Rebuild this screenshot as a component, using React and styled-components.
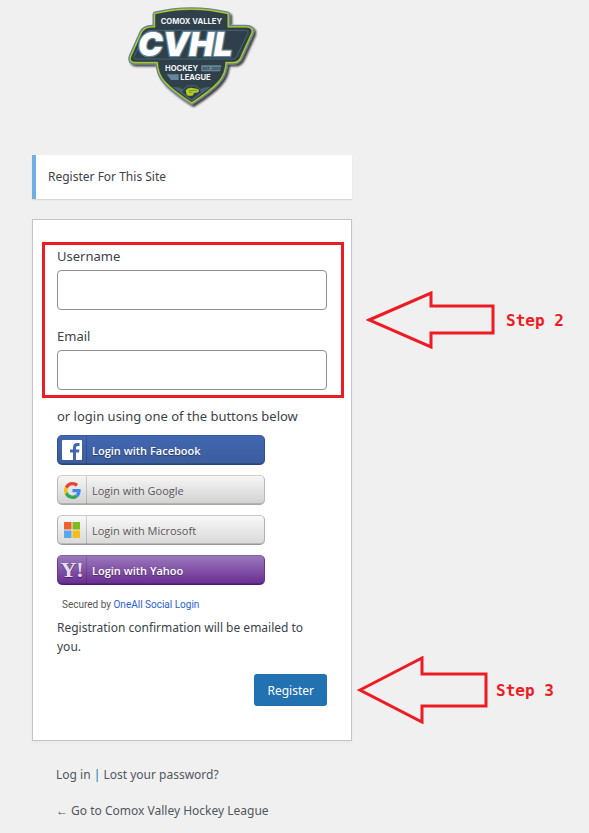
import React from 'react'
import styled, { createGlobalStyle } from 'styled-components'

const GlobalStyle = createGlobalStyle`
    * {
        box-sizing: border-box;
    }
    body {
        margin: 0;
        background: #f0f0f0;
        color: #3c434a;
        font-family: "Noto Sans", "Open Sans", sans-serif;
        font-size: 13px;
    }
`

const Page = styled.main`
    display: flex;
    flex-direction: column;
    max-width: 384px;
    padding: 0 32px 12px;
`

const Header = styled.header`
    display: flex;
    justify-content: center;
    margin-bottom: 43px;
`

const Message = styled.p`
    margin: 0 0 20px;
    padding: 12px;
    border-left: 4px solid #72aee6;
    background: #fff;
    box-shadow: 0 1px 1px rgba(0, 0, 0, 0.1);
    font-size: 12px;
    line-height: 20px;
`

const Form = styled.form`
    padding: 26px 24px 34px;
    border: 1px solid #c3c4c7;
    background: #fff;
    box-shadow: 0 1px 3px rgba(0, 0, 0, 0.04);
`

const Fields = styled.div`
    position: relative;
    display: flex;
    flex-direction: column;
    gap: 16px;
    margin-bottom: 16px;
`

const Field = styled.div`
    display: flex;
    flex-direction: column;
    gap: 3px;
`

const Label = styled.label`
    line-height: 21px;
`

const Input = styled.input`
    width: 100%;
    height: 40px;
    padding: 3px 5px;
    border: 1px solid #8c8f94;
    border-radius: 4px;
    background: #fff;
    font-family: inherit;
    font-size: 24px;
`

const Highlight = styled.div`
    position: absolute;
    inset: -4px -17px -8px -15px;
    border: 3px solid #ed1c24;
    pointer-events: none;
`

const Step = styled.div`
    position: absolute;
    top: 50%;
    left: 100%;
    display: flex;
    align-items: center;
    gap: 8px;
    margin-left: ${(props) => props.$space};
    transform: translateY(-50%);
    color: #ed1c24;
    font-family: "DejaVu Sans Mono", monospace;
    font-size: 16px;
    font-weight: bold;
    white-space: nowrap;
`

const Text = styled.p`
    margin: 0;
    line-height: 21px;
`

const Notice = styled.p`
    margin: 0;
    font-size: 12px;
    line-height: 19px;
`

const Providers = styled.div`
    display: flex;
    flex-direction: column;
    align-items: flex-start;
    gap: 10px;
    margin: 8px 0 12px;
`

const looks = {
    facebook: `
        border-color: #3a5a9b #2f4f8f #27457f;
        background: linear-gradient(#4267b2, #3b5d9c);
        color: #fff;
    `,
    google: `
        border-color: #cfcfc6 #b9b9b2 #a9a9a2;
        background: linear-gradient(#f6f6f6, #d2d2d2);
        color: #5a5a5a;
    `,
    microsoft: `
        border-color: #c6c6c6 #b0b0b0 #989898;
        background: linear-gradient(#f8f8f8, #d9d9d9);
        color: #5a5a5a;
    `,
    yahoo: `
        border-color: #8160a8 #65378f #4c1c74;
        background: linear-gradient(#9a78bb, #692d91);
        color: #fff;
    `,
}

const ProviderButton = styled.button`
    display: flex;
    align-items: stretch;
    width: 208px;
    max-width: 100%;
    height: 30px;
    padding: 0;
    border: 1px solid;
    border-radius: 5px;
    box-shadow: inset 0 -1px 0 rgba(0, 0, 0, 0.15);
    font-family: "Open Sans", sans-serif;
    font-size: 11px;
    font-weight: ${(props) => (props.$bold ? 600 : 400)};
    text-shadow: ${(props) => (props.$bold ? '0 1px 1px rgba(0, 0, 0, 0.4)' : 'none')};
    cursor: pointer;
    ${(props) => looks[props.$look]}
`

const ProviderIcon = styled.span`
    display: flex;
    align-items: center;
    justify-content: center;
    width: 29px;
    border-right: 1px solid rgba(0, 0, 0, 0.16);
`

const ProviderName = styled.span`
    align-self: center;
    padding-left: 5px;
`

const Secured = styled.p`
    margin: 0 0 5px;
    padding-left: 5px;
    color: #555;
    font-family: Roboto, sans-serif;
    font-size: 10px;
    line-height: 16px;

    a {
        color: #2a5ed0;
        text-decoration: none;
    }
`

const Actions = styled.div`
    position: relative;
    display: flex;
    justify-content: flex-end;
    margin-top: 18px;
`

const Submit = styled.button`
    height: 32px;
    padding: 0 13px;
    border: 0;
    border-radius: 3px;
    background: #2271b1;
    color: #fff;
    font-family: inherit;
    font-size: 12px;
    cursor: pointer;
`

const Links = styled.nav`
    display: flex;
    flex-direction: column;
    gap: 16px;
    padding: 24px 24px 0;
    color: #2271b1;
    font-size: 12px;
    line-height: 20px;

    a {
        color: #50575e;
        text-decoration: none;
    }
`

const Logo = () => (
    <svg width="142" height="112" viewBox="3 0 426 336" role="img" aria-label="Comox Valley Hockey League">
        <defs>
            <filter id="drop" x="-10%" y="-10%" width="125%" height="125%">
                <feDropShadow dx="6" dy="6" stdDeviation="3" floodColor="#000" floodOpacity="0.75" />
            </filter>
            <g id="plates">
                <path d="M106 90V43Q212 17 322 43V90Z" />
                <path d="M114 180Q114 222 138 246Q160 270 215 306Q270 270 292 246Q316 222 316 180Z" />
                <path d="M96 83H378Q399 83 393 99L360 172Q354 185 340 185H44Q29 185 34 171L66 99Q74 83 96 83Z" />
            </g>
        </defs>
        <g filter="url(#drop)" strokeLinejoin="round">
            <use href="#plates" fill="#668799" stroke="#668799" strokeWidth="17" />
        </g>
        <use href="#plates" fill="#b5cf1f" stroke="#b5cf1f" strokeWidth="9" />
        <use href="#plates" fill="#2f404b" stroke="#2f404b" strokeWidth="1" />
        <path d="M98 91H374Q388 91 383 101L351 168Q347 177 337 177H50Q39 177 43 168L74 101Q80 91 98 91Z" fill="none" stroke="#486373" strokeWidth="3" />
        <text x="54" y="167" fill="#fff" stroke="#668799" strokeWidth="8" paintOrder="stroke" strokeLinejoin="round" fontFamily="Inter, sans-serif" fontSize="99" fontWeight="900" fontStyle="italic">CVHL</text>
        <g fill="#f2f4f5" fontFamily="Inter, sans-serif" fontSize="23" fontWeight="700">
            <text x="122" y="71">COMOX VALLEY</text>
            <text x="135" y="212">HOCKEY</text>
            <text x="181" y="241">LEAGUE</text>
        </g>
        <path d="M244 196H304L300 214H244Z" fill="#668799" />
        <text x="248" y="209" fill="#2f404b" fontFamily="Inter, sans-serif" fontSize="11" fontWeight="700">EST. 2001</text>
        <path d="M140 223H176V240H153Z" fill="#668799" />
        <path d="M158 261Q178 260 189 268Q198 255 215 255Q233 255 241 268Q253 260 272 261L215 303Z" fill="#486373" />
        <path d="M187 277Q195 257 215 257Q235 257 243 277L215 298Z" fill="#2f404b" />
        <path d="M197 271Q205 261 217 264L233 267Q239 270 235 277L222 279L219 286Q207 290 200 284Z" fill="#b5cf1f" />
        <path d="M207 272L232 271M207 277H218" stroke="#65771e" strokeWidth="2" />
    </svg>
)

const FacebookIcon = () => (
    <svg width="20" height="20" viewBox="0 0 20 20" aria-hidden="true">
        <rect width="20" height="20" rx="1" fill="#fff" />
        <path d="M11 20V12.500H8V9.500H11V7.500Q11 3 15 3H17.500V6H15.800Q14 6 14 7.600V9.500H17.400L17 12.500H14V20Z" fill="#4267b2" />
    </svg>
)

const GoogleIcon = () => (
    <svg width="17" height="17" viewBox="0 0 48 48" aria-hidden="true">
        <path fill="#ea4335" d="M24 9.500c3.540 0 6.710 1.220 9.210 3.600l6.850-6.850C35.900 2.380 30.470 0 24 0 14.620 0 6.510 5.380 2.560 13.220l7.980 6.190C12.430 13.720 17.740 9.500 24 9.500z" />
        <path fill="#4285f4" d="M46.980 24.550c0-1.570-.15-3.090-.38-4.550H24v9.020h12.940c-.58 2.960-2.260 5.480-4.780 7.180l7.730 6c4.510-4.180 7.090-10.360 7.090-17.650z" />
        <path fill="#fbbc05" d="M10.530 28.590c-.48-1.450-.76-2.990-.76-4.590s.27-3.140.76-4.590l-7.980-6.190C.92 16.460 0 20.120 0 24s.92 7.540 2.560 10.780l7.970-6.190z" />
        <path fill="#34a853" d="M24 48c6.480 0 11.930-2.130 15.890-5.810l-7.730-6c-2.150 1.450-4.920 2.300-8.160 2.300-6.260 0-11.570-4.220-13.470-9.910l-7.980 6.190C6.510 42.620 14.620 48 24 48z" />
    </svg>
)

const MicrosoftIcon = () => (
    <svg width="16" height="16" viewBox="0 0 16 16" aria-hidden="true">
        <path fill="#f1602f" d="M0 0h7.500v7.500H0z" />
        <path fill="#80bb1c" d="M8.500 0H16v7.500H8.500z" />
        <path fill="#56a9ec" d="M0 8.500h7.500V16H0z" />
        <path fill="#f7bc1c" d="M8.500 8.500H16V16H8.500z" />
    </svg>
)

const YahooIcon = styled.span`
    color: #e6dfee;
    font-family: "Liberation Serif", serif;
    font-size: 22px;
    font-weight: bold;
    line-height: 24px;
`

const providers = [
    { id: 'facebook', name: 'Facebook', bold: true, icon: <FacebookIcon /> },
    { id: 'google', name: 'Google', icon: <GoogleIcon /> },
    { id: 'microsoft', name: 'Microsoft', icon: <MicrosoftIcon /> },
    { id: 'yahoo', name: 'Yahoo', bold: true, icon: <YahooIcon aria-hidden="true">Y!</YahooIcon> },
]

const App = () => {
    return (
        <>
            <GlobalStyle />
            <Page>
                <Header>
                    <Logo />
                </Header>
                <Message>Register For This Site</Message>
                <Form onSubmit={(e) => e.preventDefault()}>
                    <Fields>
                        <Field>
                            <Label htmlFor="username">Username</Label>
                            <Input id="username" type="text" autoComplete="username" />
                        </Field>
                        <Field>
                            <Label htmlFor="email">Email</Label>
                            <Input id="email" type="email" autoComplete="email" />
                        </Field>
                        <Highlight>
                            <Step $space="25px">
                                <svg width="132" height="58" viewBox="0 0 132 58" fill="none" stroke="#ed1c24" strokeWidth="3" aria-hidden="true">
                                    <path d="M3 29L65 2V15H127V42H65V56Z" />
                                </svg>
                                Step 2
                            </Step>
                        </Highlight>
                    </Fields>
                    <Text>or login using one of the buttons below</Text>
                    <Providers>
                        {providers.map((p) => (
                            <ProviderButton key={p.id} type="button" $look={p.id} $bold={p.bold}>
                                <ProviderIcon>{p.icon}</ProviderIcon>
                                <ProviderName>Login with {p.name}</ProviderName>
                            </ProviderButton>
                        ))}
                    </Providers>
                    <Secured>
                        Secured by <a href="#oneall">OneAll Social Login</a>
                    </Secured>
                    <Notice>Registration confirmation will be emailed to you.</Notice>
                    <Actions>
                        <Submit type="submit">Register</Submit>
                        <Step $space="30px">
                            <svg width="131" height="68" viewBox="0 0 131 68" fill="none" stroke="#ed1c24" strokeWidth="3" aria-hidden="true">
                                <path d="M3 34L65 2V18H129V50H65V66Z" />
                            </svg>
                            Step 3
                        </Step>
                    </Actions>
                </Form>
                <Links>
                    <span>
                        <a href="#login">Log in</a> | <a href="#lost">Lost your password?</a>
                    </span>
                    <a href="#home">← Go to Comox Valley Hockey League</a>
                </Links>
            </Page>
        </>
    )
}

export default App
